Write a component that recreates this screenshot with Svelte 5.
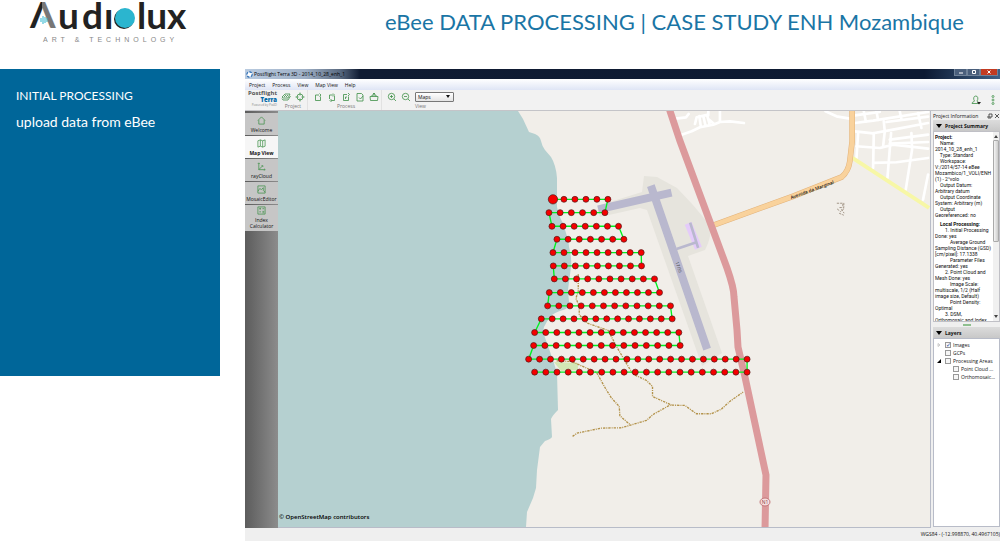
<script>
  const menus = ["Project", "Process", "View", "Map View", "Help"];
  const views = ["Welcome", "Map View", "rayCloud", "MosaicEditor", "Index Calculator"];
  let activeView = $state("Map View");
  let source = $state("Maps");

  let layers = $state([
    { name: "Images", checked: true, arrow: "closed", depth: 0 },
    { name: "GCPs", checked: false, arrow: "", depth: 0 },
    { name: "Processing Areas", checked: false, arrow: "open", depth: 0 },
    { name: "Point Cloud ...", checked: false, arrow: "", depth: 1 },
    { name: "Orthomosaic...", checked: false, arrow: "", depth: 1 },
  ]);

  const projectInfo = `    Name:
2014_10_28_enh_1
    Type: Standard
    Workspace:
V:/2014/57-14 eBee
Mozambico/1_VOLI/ENH
(1) - 2°volo
    Output Datum:
Arbitrary datum
    Output Coordinate
System: Arbitrary (m)
    Output
Georeferenced: no`;

  const processingInfo = `        1. Initial Processing
Done: yes
            Average Ground
Sampling Distance (GSD)
[cm/pixel]: 17.1338
            Parameter Files
Generated: yes
        2. Point Cloud and
Mesh Done: yes
            Image Scale:
multiscale, 1/2 (Half
image size, Default)
            Point Density:
Optimal
        3. DSM,
Orthomosaic and Index`;

  // flight lines: first x, last x, y, number of shots
  const lines = [
    [159, 324, 58, 6],
    [147, 315, 98, 6],
    [156, 356, 139, 7],
    [171, 372, 178, 7],
    [159, 424, 218, 9],
    [160, 425, 258, 9],
    [163, 464, 297, 10],
    [148, 479, 338, 11],
    [143, 512, 378, 12],
    [124, 517, 417, 13],
    [104, 537, 458, 14],
    [101, 541, 497, 14],
    [86, 742, 538, 21],
    [104, 742, 577, 20],
  ];

  // the drone turns at the end of every line
  const shots = lines.flatMap(([from, to, y, count], row) => {
    const points = Array.from({ length: count }, (_, i) => ({
      x: from + ((to - from) * i) / (count - 1),
      y,
    }));
    return row % 2 ? points.reverse() : points;
  });
  const track = shots.map((p) => `${p.x},${p.y}`).join(" ");
</script>

<div class="page">
  <header class="top">
    <svg class="logo" viewBox="0 0 220 50" role="img" aria-label="Audiolux art &amp; technology">
      <defs>
        <linearGradient id="peak">
          <stop offset="0.5" stop-color="#222" />
          <stop offset="0.5" stop-color="#777" />
        </linearGradient>
      </defs>
      <text class="brand peak" x="30" y="28">Λ</text>
      <path d="M41 18v4M43 16v8M45 17v6M47 18v4" stroke="#2bb5cf" stroke-width="1" />
      <text class="brand" x="58" y="29">u</text>
      <text class="brand" x="82" y="29">d</text>
      <text class="brand" x="104" y="29">ı</text>
      <circle cx="124" cy="19" r="10" fill="#222" />
      <circle cx="125" cy="18" r="10" fill="#2bb5cf" />
      <text class="brand" x="137" y="29">lux</text>
      <text class="tagline" x="43" y="42">ART &amp; TECHNOLOGY</text>
    </svg>
    <h1>eBee DATA PROCESSING | CASE STUDY ENH Mozambique</h1>
  </header>

  <main>
    <section class="note">
      <h2>INITIAL PROCESSING</h2>
      <p>upload data from eBee</p>
    </section>

    <section class="app">
      <div class="titlebar">
        <svg class="app-icon" viewBox="0 0 8 8">
          <circle cx="4" cy="4" r="3" fill="#fff" stroke="#2a6db5" stroke-width="1.4" stroke-dasharray="3 1.5" />
        </svg>
        <span class="title">Postflight Terra 3D - 2014_10_28_enh_1</span>
        <div class="window-buttons">
          <button aria-label="Minimize"><svg viewBox="0 0 8 6"><path d="M2 4h4" stroke="#fff" /></svg></button>
          <button aria-label="Restore"><svg viewBox="0 0 8 6"><path d="M2.500 1.500h3v3h-3z" stroke="#fff" fill="none" /></svg></button>
          <button class="close" aria-label="Close"><svg viewBox="0 0 8 6"><path d="M2.500 1.500l3 3m0-3l-3 3" stroke="#fff" /></svg></button>
        </div>
      </div>

      <nav class="menubar">
        {#each menus as menu}
          <button>{menu}</button>
        {/each}
      </nav>

      <div class="toolbar">
        <div class="terra">
          <span>Postflight</span>
          <strong>Terra</strong>
          <small>Powered by Pix4D</small>
        </div>

        <div class="group">
          <div class="tools">
            <button aria-label="Image properties">
              <svg viewBox="0 0 10 10"><path d="M1 5l3-3h5l-2 4H2zM1 6.500L2 8h5l2.500-4M3 5l2-2M5 5l2-2" /></svg>
            </button>
            <button aria-label="GCP manager">
              <svg viewBox="0 0 10 10"><circle cx="5" cy="5" r="3" /><path d="M5 0.500v3M5 6.500v3M0.500 5h3M6.500 5h3" /></svg>
            </button>
          </div>
          <span class="caption">Project</span>
        </div>

        <div class="group">
          <div class="tools">
            <button aria-label="Initial processing">
              <svg viewBox="0 0 10 10"><path d="M6 3H2.500v5.500h5V4.500M6.500 1.500l1.500 1.500-1.500 1.500" /></svg>
            </button>
            <button aria-label="Point cloud">
              <svg viewBox="0 0 10 10"><path d="M2.500 7V3H6M7.500 4v4.500H4M6 1.500L7.500 3 6 4.500M4.500 7L3 8.500 4.500 10" /></svg>
            </button>
            <button aria-label="Orthomosaic">
              <svg viewBox="0 0 10 10"><path d="M6 2.500H2.500V8.500h5V4.500M4.500 7V5h1.500M7 1l1.500 1.500L7 4" /></svg>
            </button>
            <button aria-label="Quality report">
              <svg viewBox="0 0 10 10"><path d="M2 1.500h4.500L8 3v6H2zM4 5.500l1.500 1.500L8 4" /></svg>
            </button>
            <button aria-label="Output folder">
              <svg viewBox="0 0 10 10"><path d="M1 4.500h8L8.500 8.500h-7zM3 4.500V3h4v1.500M5 3V1M4 2l1-1 1 1" /></svg>
            </button>
          </div>
          <span class="caption">Process</span>
        </div>

        <div class="group">
          <div class="tools">
            <button aria-label="Zoom in">
              <svg viewBox="0 0 10 10"><circle cx="4.500" cy="4.500" r="3.200" /><path d="M7 7l2 2M3 4.500h3M4.500 3v3" /></svg>
            </button>
            <button aria-label="Zoom out">
              <svg viewBox="0 0 10 10"><circle cx="4.500" cy="4.500" r="3.200" /><path d="M7 7l2 2M3 4.500h3" /></svg>
            </button>
            <label class="source">
              <select aria-label="Map source" bind:value={source}>
                <option>Maps</option>
                <option>Satellite</option>
              </select>
              <svg viewBox="0 0 4 3"><path d="M0 0h4L2 3z" /></svg>
            </label>
          </div>
          <span class="caption">View</span>
        </div>

        <div class="account">
          <button aria-label="Account">
            <svg viewBox="0 0 10 10"><path d="M1 8.500c0-2 2.500-1.500 2.500-2.500C2 4 2.500 1 4.800 1S7.500 4 6 6c0 1 2 .500 2 2.500z" /><path class="dark" d="M6 7h4L8 9.500z" /></svg>
          </button>
          <button aria-label="More">
            <svg viewBox="0 0 10 10"><circle cx="5" cy="1.500" r="1" /><circle cx="5" cy="5" r="1" /><circle cx="5" cy="8.500" r="1" /></svg>
          </button>
        </div>
      </div>

      <div class="workspace">
        <nav class="views">
          {#each views as view}
            <button class:active={activeView === view} onclick={() => (activeView = view)}>
              <svg viewBox="0 0 10 10">
                {#if view === "Welcome"}
                  <path d="M1 5l4-4 4 4M2 4.500V9h6V4.500" />
                {:else if view === "Map View"}
                  <path d="M1 2l2.700-1 2.600 1L9 1v7L6.300 9 3.700 8 1 9zM3.700 1v7M6.300 2v7" />
                {:else if view === "rayCloud"}
                  <path d="M2 1v7.500h7M2 8.500l4-4M1 2l1-1 1 1M8 7.500l1 1-1 1M5 4h1.500v1.500" />
                {:else if view === "MosaicEditor"}
                  <path d="M1 1h8v8H1zM1 7l2-3 2 1 2-2v3l2 2" />
                {:else}
                  <path d="M1 1h8v8H1zM2.500 3h2M3.500 2v2M6 3h2M2.500 6.500h2M6 6h2M6 7.500h2" />
                {/if}
              </svg>
              <span>{view}</span>
            </button>
          {/each}
        </nav>

        <div class="map">
          <svg viewBox="278 111 652 416" preserveAspectRatio="xMidYMid slice" role="img" aria-label="Flight plan over the coast">
            <path class="land" d="M278 111h652v416H278z" />
            <path
              class="sea"
              d="M278 111H518L523 119L529 132L535 134Q540 136 541 141T545 150L551 157Q556 165 557 178V207Q559 217 563 223L566 233Q569 243 569 247Q572 258 571 267L568 290L569 302Q570 308 563 310Q553 313 550 317T544 327L543 332L553 360L557 373L558 410Q552 416 551 419L552 437Q551 439 545 441L540 447L537 470L536 488L533 498L527 512L526 527H278z"
            />
            <path class="park" d="M554 362L578 363V370L561 371z" />
            <path class="apron" d="M644 176L657 177L677 188L693 205L708 223Q711 230 710 236T705 250L688 256L722 353L702 366L647 210L640 208L600 217L597 206L642 192z" />

            <g transform="translate(660 108) scale(0.333)">
              <g class="street">
                <path d="M65 80L95 70L120 58L160 50L180 42L210 40L252 45M48 32L78 28L86 18M105 48L110 28L145 20M122 52L118 24M136 50L130 24M150 52L142 24M160 46L146 34M145 22V10M180 10V42M497 10L530 25L570 32" />
                <path d="M585 22L660 12M585 45L640 38L805 12M585 70L640 76L700 65L805 45M680 42L805 26M590 115L660 120L700 110L805 122M640 165L710 163L805 150M690 95L805 80M690 107L805 102" />
                <path d="M612 10L618 40M595 75L590 150M642 75L640 180M672 40L675 70L670 115M694 75L683 210M720 10L725 34M755 75L757 125L738 245M775 15L785 60M650 10L655 36M805 200L790 275" />
              </g>
              <path class="yellow" d="M578 150L808 300" />
              <path class="orange-edge" d="M577 6V100L570 160Q566 190 546 207L400 265L155 354" />
              <path class="orange" d="M577 6V100L570 160Q566 190 546 207L400 265L155 354" />
              <path class="ruin" d="M531 286h18v10M552 285v14h-14M532 303l10 8 12-10M538 316l14 6M545 304l8 12" />
              <text class="road-name" x="457" y="251" transform="rotate(-20 457 246)">Avenida da Marginal</text>
            </g>

            <g transform="translate(500 180) scale(0.333)">
              <path class="terminal" d="M565 130L596 205" />
              <path class="runway" d="M453 17L622 508M295 88L515 38" />
              <path class="taxiway" d="M571 128L595 204M530 207L592 186" />
              <text class="runway-name" x="537" y="267" transform="rotate(71 537 262)">17/35</text>
              <path class="footpath" d="M235 283V335L228 355L238 380V405L262 430L325 452L350 500L385 560L400 583L440 602L458 620L458 650L515 676M170 543L215 545L290 578L318 628L335 655L358 680L360 708L392 736" />
              <path class="footpath" d="M218 770L232 760L305 745L365 744L440 722L460 704L510 676L555 677L590 702L635 702L665 688L690 665L730 637" />
            </g>

            <path class="main-road" d="M669 108L680 141L710 222L727 268Q734 288 734 297L737 330L738 347L745 377L766 475L765 530" />
            <ellipse class="shield" cx="765" cy="502" rx="5" ry="4" />
            <text class="shield-name" x="765" y="504">N1</text>

            <g transform="translate(500 180) scale(0.333)">
              <polyline class="track" points={track} />
              {#each shots as shot, i}
                <circle class="shot" cx={shot.x} cy={shot.y} r={i === 0 ? 14 : 9} />
              {/each}
            </g>
          </svg>
          <a class="credit" href="#osm">© OpenStreetMap contributors</a>
        </div>

        <aside class="dock">
          <div class="dock-title">
            <span>Project Information</span>
            <button aria-label="Float"><svg viewBox="0 0 6 6"><path d="M2 1h3v3H2zM1 3v2h3" /></svg></button>
            <button aria-label="Close panel"><svg viewBox="0 0 6 6"><path d="M1 1l4 4M5 1L1 5" /></svg></button>
          </div>

          <h3><svg viewBox="0 0 6 4"><path d="M0 0h6L3 4z" /></svg>Project Summary</h3>
          <div class="summary">
            <div class="text">
              <h4>Project:</h4>
              <p>{projectInfo}</p>
              <h4 class="indent">Local Processing:</h4>
              <p>{processingInfo}</p>
            </div>
            <div class="scrollbar">
              <svg viewBox="0 0 4 3"><path d="M0 3h4L2 0z" /></svg>
              <div class="thumb"></div>
              <svg viewBox="0 0 4 3"><path d="M0 0h4L2 3z" /></svg>
            </div>
          </div>
          <div class="splitter"></div>

          <h3><svg viewBox="0 0 6 4"><path d="M0 0h6L3 4z" /></svg>Layers</h3>
          <ul class="layers">
            {#each layers as layer}
              <li class:child={layer.depth > 0}>
                <svg viewBox="0 0 4 4">
                  {#if layer.arrow === "closed"}
                    <path d="M1 0.500L3 2L1 3.500z" fill="none" stroke="#999" stroke-width="0.500" />
                  {:else if layer.arrow === "open"}
                    <path d="M0 4h4V0z" />
                  {/if}
                </svg>
                <label><input type="checkbox" bind:checked={layer.checked} />{layer.name}</label>
              </li>
            {/each}
          </ul>
        </aside>
      </div>

      <footer class="status">WGS84 - (-12.998870, 40.4967105)</footer>
    </section>
  </main>
</div>

<style>
  :global(body) {
    margin: 0;
    background: #fff;
  }

  .page,
  .page * {
    box-sizing: border-box;
  }

  .page {
    display: flex;
    flex-direction: column;
    height: 100vh;
    overflow: hidden;
    font-family: "Open Sans", "Noto Sans", sans-serif;
  }

  button {
    margin: 0;
    padding: 0;
    border: none;
    background: none;
    font: inherit;
    color: inherit;
    cursor: pointer;
  }

  svg {
    display: block;
  }

  h1,
  h2,
  h3,
  h4,
  p,
  ul {
    margin: 0;
    padding: 0;
    font-weight: normal;
  }

  /* slide header */
  .top {
    display: flex;
    align-items: flex-start;
    flex: none;
    height: 69px;
  }

  .logo {
    width: 220px;
    height: 50px;
    flex: none;
    overflow: visible;
  }

  .brand {
    font-family: Lato, sans-serif;
    font-weight: 700;
    font-size: 37px;
    fill: #222;
  }

  .peak {
    fill: url(#peak);
  }

  .tagline {
    font-family: "Liberation Sans", sans-serif;
    font-size: 7px;
    letter-spacing: 4px;
    fill: #888;
  }

  h1 {
    flex: 1;
    padding: 8px 36px 0 0;
    text-align: right;
    font-family: Lato, sans-serif;
    font-size: 22px;
    line-height: 28px;
    color: #1a75a5;
  }

  main {
    display: flex;
    flex: 1;
    gap: 25px;
    min-height: 0;
  }

  .note {
    align-self: flex-start;
    width: 220px;
    min-height: 307px;
    flex: none;
    padding: 18px 16px;
    background: #006699;
    color: #fff;
    font-family: Lato, sans-serif;
    font-size: 14px;
    line-height: 18px;
  }

  .note h2 {
    margin-bottom: 8px;
    font-size: 12px;
  }

  /* application window */
  .app {
    display: flex;
    flex: 1;
    flex-direction: column;
    min-width: 0;
    background: #efefef;
    color: #111;
    font-size: 5px;
    line-height: 6px;
  }

  .titlebar {
    display: flex;
    height: 10px;
    flex: none;
    align-items: center;
    padding-left: 1px;
    background: linear-gradient(90deg, #b9cbe0 0, #9fb0c6 60px, #5a6a80 95px, #101c33 115px, #0d1a33 90%, #3f6288 100%);
  }

  .app-icon {
    width: 7px;
    height: 7px;
    margin-right: 1px;
  }

  .title {
    flex: 1;
    color: #000;
  }

  .window-buttons {
    display: flex;
    align-self: flex-start;
    margin-right: 2px;
  }

  .window-buttons button {
    width: 13px;
    height: 7px;
    border: 1px solid #6f8299;
    border-top: none;
    background: #4a5f7c;
  }

  .window-buttons .close {
    width: 18px;
    background: #c23b22;
  }

  .window-buttons svg {
    width: 8px;
    height: 6px;
    margin: auto;
  }

  .menubar {
    display: flex;
    height: 11px;
    flex: none;
    align-items: center;
    gap: 7px;
    padding-left: 4px;
    background: linear-gradient(#fff, #dfe5f5);
  }

  .toolbar {
    display: flex;
    height: 21px;
    flex: none;
    border-bottom: 1px solid #c4c4c8;
    background: #f2f2f2;
  }

  .terra {
    display: flex;
    width: 32px;
    flex-direction: column;
    align-items: flex-end;
    font-size: 6px;
    font-weight: bold;
    line-height: 7px;
    color: #555;
  }

  .terra strong {
    line-height: 6px;
    color: #0068a8;
  }

  .terra small {
    font-size: 3px;
    font-weight: normal;
    line-height: 4px;
    color: #888;
  }

  .group {
    display: flex;
    flex-direction: column;
    align-items: center;
    padding: 1px 2px 0 4px;
    border-right: 1px solid #e2e2e2;
  }

  .group:nth-of-type(3),
  .group:nth-of-type(4) {
    padding-left: 5px;
  }

  .group:nth-of-type(4) {
    border: none;
  }

  .tools {
    display: flex;
    height: 11px;
    align-items: center;
    gap: 4px;
  }

  .tools button,
  .tools button svg {
    width: 10px;
    height: 10px;
  }

  .toolbar svg,
  .views svg {
    fill: none;
    stroke: #3d8f46;
    stroke-width: 0.8;
  }

  .caption {
    line-height: 8px;
    color: #777;
  }

  .source {
    display: flex;
    width: 39px;
    height: 10px;
    align-items: center;
    padding-right: 3px;
    border: 1px solid #777;
    border-radius: 1px;
    background: linear-gradient(#fff, #e4e4e4);
  }

  .source select {
    min-width: 0;
    flex: 1;
    padding: 0 2px;
    border: none;
    appearance: none;
    background: none;
    font: inherit;
    color: inherit;
  }

  .source svg {
    width: 4px;
    height: 3px;
    fill: #111;
    stroke: none;
  }

  .account {
    display: flex;
    align-items: center;
    gap: 7px;
    margin-left: auto;
    padding-right: 2px;
  }

  .account button svg {
    width: 10px;
    height: 10px;
  }

  .account .dark {
    fill: #222;
    stroke: none;
  }

  .workspace {
    display: flex;
    flex: 1;
    min-height: 0;
  }

  .views {
    display: flex;
    width: 33px;
    flex: none;
    flex-direction: column;
    gap: 1px;
    padding-top: 2px;
    background: linear-gradient(90deg, #5c5c5c, #8c8c8c);
  }

  .views button {
    display: flex;
    height: 22px;
    flex: none;
    flex-direction: column;
    align-items: center;
    justify-content: flex-start;
    gap: 2px;
    padding-top: 3px;
    background: #c6c6c6;
  }

  .views button:last-child {
    height: 26px;
    padding-top: 1px;
  }

  .views .active {
    background: #f6f6f6;
    font-weight: bold;
  }

  .views button svg {
    width: 9px;
    height: 9px;
    flex: none;
  }

  .views span {
    max-width: 31px;
  }

  .views button:last-child span {
    max-width: 28px;
  }

  .map {
    position: relative;
    min-width: 0;
    flex: 1;
    border-right: 1px solid #b8bcc8;
    border-bottom: 1px solid #b8bcc8;
  }

  .map > svg {
    width: 100%;
    height: 100%;
  }

  .map path,
  .map polyline {
    fill: none;
  }

  .map .land {
    fill: #f1eee9;
  }

  .map .sea {
    fill: #b5d0d0;
  }

  .map .park {
    fill: #d3e6b4;
  }

  .map .apron {
    fill: #e6e4dd;
  }

  .street {
    stroke: #fff;
    stroke-width: 8;
    stroke-linejoin: round;
    stroke-linecap: round;
  }

  .yellow {
    stroke: #f7f7a6;
    stroke-width: 12;
  }

  .orange-edge {
    stroke: #e2b27a;
    stroke-width: 17;
  }

  .orange {
    stroke: #f9d29c;
    stroke-width: 14;
  }

  .ruin {
    stroke: #a39688;
    stroke-width: 3;
    stroke-dasharray: 7 3;
  }

  .road-name {
    font-size: 14px;
    font-weight: 600;
    text-anchor: middle;
    fill: #222;
  }

  .runway {
    stroke: #b9b8ce;
    stroke-width: 24;
  }

  .taxiway {
    stroke: #b9b8ce;
    stroke-width: 8;
  }

  .terminal {
    stroke: #e4cbfa;
    stroke-width: 22;
  }

  .runway-name {
    font-size: 13px;
    text-anchor: middle;
    fill: #444;
  }

  .footpath {
    stroke: #b3924a;
    stroke-width: 4;
    stroke-dasharray: 7 3 3 3;
  }

  .main-road {
    stroke: #dc9a9c;
    stroke-width: 7;
  }

  .shield {
    fill: #f6dede;
    stroke: #c4777a;
  }

  .shield-name {
    font-size: 5px;
    text-anchor: middle;
    fill: #8c3c40;
  }

  .track {
    stroke: #00f020;
    stroke-width: 4;
  }

  .shot {
    fill: #f50000;
    stroke: #4a1a1a;
    stroke-width: 2;
  }

  .credit {
    position: absolute;
    bottom: 6px;
    left: 1px;
    font-size: 6px;
    font-weight: 600;
    line-height: 8px;
    color: #000;
    text-decoration: none;
  }

  /* right hand panel */
  .dock {
    display: flex;
    width: 69px;
    flex: none;
    flex-direction: column;
    padding: 0 0 1px 2px;
  }

  .dock-title {
    display: flex;
    height: 9px;
    flex: none;
    align-items: center;
    gap: 1px;
  }

  .dock-title span {
    flex: 1;
    white-space: nowrap;
  }

  .dock-title svg {
    width: 6px;
    height: 6px;
    fill: none;
    stroke: #333;
    stroke-width: 0.8;
  }

  .dock h3 {
    display: flex;
    height: 11px;
    flex: none;
    align-items: center;
    gap: 3px;
    padding-left: 3px;
    background: linear-gradient(#dcdcdc, #c8c8c8);
    font-size: 5px;
    font-weight: bold;
  }

  .dock h3 svg {
    width: 6px;
    height: 4px;
  }

  .summary {
    display: flex;
    height: 191px;
    flex: none;
    border: 1px solid #c0c0c6;
    background: #fff;
  }

  .text {
    min-width: 0;
    flex: 1;
    padding: 2px 0 0 1px;
    overflow: hidden;
    font-family: Roboto, sans-serif;
  }

  .text h4 {
    font-weight: bold;
  }

  .text p {
    white-space: pre;
  }

  .text .indent {
    margin-top: 3px;
    padding-left: 5px;
  }

  .scrollbar {
    display: flex;
    width: 6px;
    flex: none;
    flex-direction: column;
    align-items: center;
    gap: 2px;
    padding: 3px 0;
    background: #f0f0f0;
  }

  .scrollbar svg {
    width: 4px;
    height: 3px;
    fill: #444;
  }

  .scrollbar svg:last-child {
    margin-top: auto;
  }

  .thumb {
    width: 6px;
    height: 102px;
    border: 1px solid #aaa;
    border-radius: 1px;
    background: linear-gradient(90deg, #f4f4f4, #ccc);
  }

  .splitter {
    width: 8px;
    height: 2px;
    flex: none;
    margin: 2px auto 1px;
    background: #8fbf8f;
  }

  .layers {
    flex: 1;
    padding-top: 2px;
    border: 1px solid #b8bcc8;
    background: #fff;
    list-style: none;
  }

  .layers li {
    display: flex;
    height: 8px;
    align-items: center;
    gap: 4px;
    padding-left: 3px;
    white-space: nowrap;
  }

  .layers .child {
    padding-left: 11px;
  }

  .layers svg {
    width: 4px;
    height: 4px;
    flex: none;
  }

  .layers label {
    display: flex;
    align-items: center;
    gap: 2px;
  }

  .layers input {
    display: grid;
    width: 6px;
    height: 6px;
    place-items: center;
    margin: 0;
    border: 1px solid #999;
    appearance: none;
    background: #f6f6f6;
  }

  .layers input:checked::before {
    content: "✓";
    font-size: 6px;
    line-height: 4px;
    color: #24479c;
  }

  .status {
    height: 13px;
    flex: none;
    text-align: right;
    line-height: 13px;
  }
</style>
